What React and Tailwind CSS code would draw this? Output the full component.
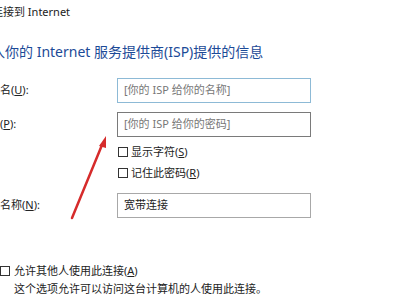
import React from 'react';

const Key = ({ k }) => (
    <span>(<span className="underline">{k}</span>)</span>
);

const Box = () => (
    <span className="inline-block w-[10px] h-[10px] border border-[#333] bg-white shrink-0"></span>
);

const Field = ({ label, value, placeholder, border }) => (
    <div className="flex items-center">
        <div className="w-[117px] shrink-0 text-[11px] text-[#222]">{label}</div>
        <div className={`w-[194px] h-[25px] border ${border} flex items-center px-[6px] text-[11px]`}>
            {value ? <span className="text-[#222]">{value}</span> : <span className="text-[#777]">{placeholder}</span>}
        </div>
    </div>
);

const App = () => {
    return (
        <div
            className="relative w-[399px] h-[300px] overflow-hidden bg-white"
            style={{ fontFamily: '"Noto Sans", "Noto Sans CJK SC", sans-serif' }}
        >
            <div className="pt-[5px] -ml-[8px] text-[11px] leading-[14px] text-[#222]">连接到 Internet</div>

            <div className="mt-[23px] -ml-[9px] text-[14px] leading-[20px] text-[#1c4a97]">
                入你的 Internet 服务提供商(ISP)提供的信息
            </div>

            <div className="mt-[16px] flex flex-col">
                <Field
                    label={<span>名<Key k="U" />:</span>}
                    placeholder="[你的 ISP 给你的名称]"
                    border="border-[#8dbad6]"
                />
                <div className="mt-[9px]">
                    <Field
                        label={<span><Key k="P" />:</span>}
                        placeholder="[你的 ISP 给你的密码]"
                        border="border-[#7a7a7a]"
                    />
                </div>

                <div className="mt-[8px] ml-[118px] flex flex-col gap-[7px] text-[11px] leading-[14px] text-[#222]">
                    <label className="flex items-center gap-[3px]">
                        <Box />
                        <span>显示字符<Key k="S" /></span>
                    </label>
                    <label className="flex items-center gap-[3px]">
                        <Box />
                        <span>记住此密码<Key k="R" /></span>
                    </label>
                </div>

                <div className="mt-[13px]">
                    <Field
                        label={<span>名称<Key k="N" />:</span>}
                        value="宽带连接"
                        border="border-[#a8a8a8]"
                    />
                </div>

                <div className="mt-[46px] flex flex-col gap-[4px] text-[11px] leading-[14px] text-[#222]">
                    <label className="flex items-center gap-[4px]">
                        <Box />
                        <span>允许其他人使用此连接<Key k="A" /></span>
                    </label>
                    <div className="pl-[14px]">这个选项允许可以访问这台计算机的人使用此连接。</div>
                </div>
            </div>

            {/* red annotation arrow */}
            <svg className="absolute left-0 top-0 pointer-events-none" width="399" height="300">
                <line x1="72" y1="218" x2="102" y2="145" stroke="#d62b2b" strokeWidth="2.5" strokeLinecap="round" />
                <polygon points="106,136 99,146 106,148" fill="#d62b2b" />
            </svg>
        </div>
    );
};

export default App;
